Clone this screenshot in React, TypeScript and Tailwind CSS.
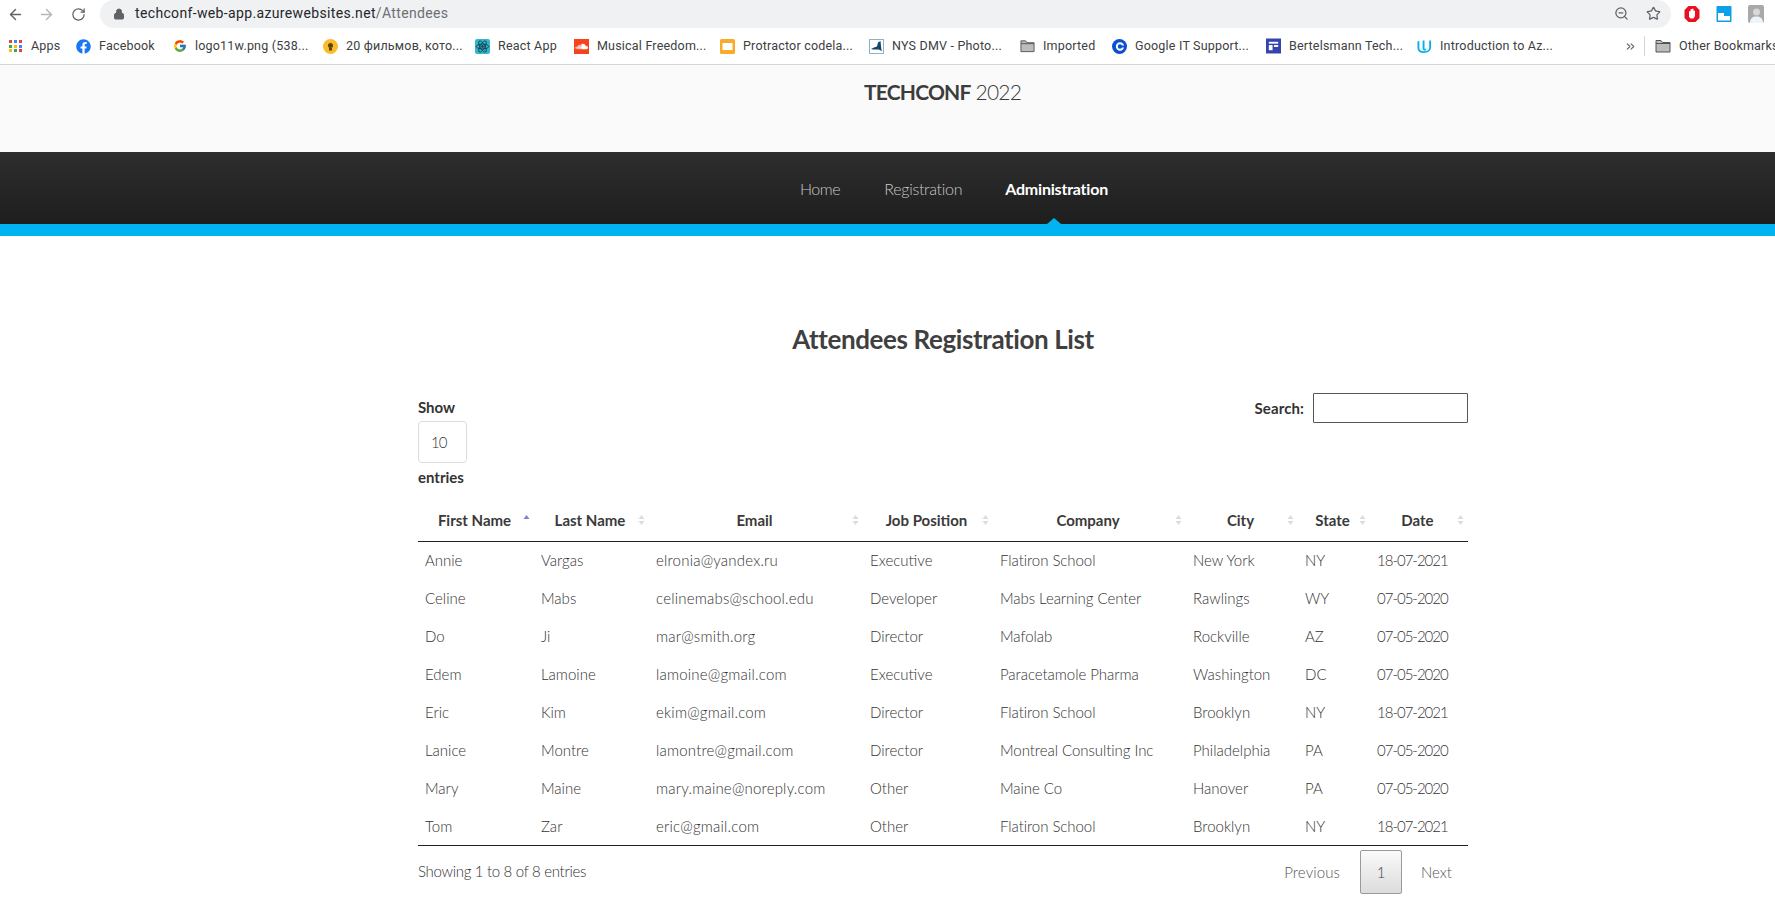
import { ArrowLeft, ArrowRight, RotateCw, Lock, ZoomOut, Star, ChevronsRight } from "lucide-react";
import { FaFacebook, FaSoundcloud } from "react-icons/fa";
import { FcGoogle } from "react-icons/fc";
import type { ReactNode } from "react";

const FolderIcon = () => (
    <svg width="16" height="14" viewBox="0 0 16 14">
        <path d="M1 1.5h5l1.5 2H15v9.5H1z" fill="#bdbdbd" stroke="#555" strokeWidth="1" />
        <path d="M1 4.5h14" stroke="#555" strokeWidth="1" />
    </svg>
);

const AppsIcon = () => {
    const colors = ["#ea4335", "#4285f4", "#ea4335", "#34a853", "#fbbc05", "#4285f4", "#fbbc05", "#34a853", "#ea4335"];
    return (
        <div className="grid grid-cols-3 gap-[1.5px] w-[13px]">
            {colors.map((c, i) => (
                <span key={i} className="h-[3px] w-[3px]" style={{ backgroundColor: c }}></span>
            ))}
        </div>
    );
};

const BulbIcon = () => (
    <svg width="15" height="15" viewBox="0 0 15 15">
        <circle cx="7.5" cy="7.5" r="7.5" fill="#fbbc2c" />
        <circle cx="7.5" cy="6.5" r="2.5" fill="#5a4510" />
        <rect x="6" y="9" width="3" height="2.5" fill="#5a4510" />
    </svg>
);

const ReactIcon = () => (
    <svg width="15" height="15" viewBox="0 0 15 15">
        <rect width="15" height="15" rx="2" fill="#35b6cf" />
        <g fill="none" stroke="#12343f" strokeWidth="0.8">
            <ellipse cx="7.5" cy="7.5" rx="6.3" ry="2.4" />
            <ellipse cx="7.5" cy="7.5" rx="6.3" ry="2.4" transform="rotate(60 7.5 7.5)" />
            <ellipse cx="7.5" cy="7.5" rx="6.3" ry="2.4" transform="rotate(120 7.5 7.5)" />
        </g>
        <circle cx="7.5" cy="7.5" r="1.2" fill="#12343f" />
    </svg>
);

const SoundIcon = () => (
    <div className="h-[15px] w-[15px] bg-[#f8421c] flex items-center justify-center text-white">
        <FaSoundcloud size={13} />
    </div>
);

const SlidesIcon = () => (
    <svg width="15" height="15" viewBox="0 0 15 15">
        <rect width="15" height="15" rx="1.5" fill="#f9ab2a" />
        <rect x="2.5" y="4" width="10" height="7" fill="#fff" />
    </svg>
);

const NyIcon = () => (
    <svg width="15" height="15" viewBox="0 0 15 15">
        <rect x="0.5" y="0.5" width="14" height="14" fill="#fff" stroke="#8fb2c9" />
        <path d="M2 10l3-1.5 3-1 1-4 2.5-1.5.8 8 .7 2-2.500-1-.5-.5H4z" fill="#12466e" />
    </svg>
);

const CircleCIcon = () => (
    <svg width="15" height="15" viewBox="0 0 15 15">
        <circle cx="7.500" cy="7.500" r="7.500" fill="#0b50d0" />
        <circle cx="8" cy="7.500" r="3.200" fill="none" stroke="#fff" strokeWidth="2" />
        <rect x="10" y="6.500" width="3" height="2" fill="#0b50d0" />
    </svg>
);

const BertelsmannIcon = () => (
    <svg width="16" height="16" viewBox="0 0 16 16">
        <rect width="16" height="16" fill="#3444ac" />
        <rect x="3" y="3.500" width="10" height="2" fill="#fff" />
        <rect x="3" y="7" width="4" height="5.500" fill="#fff" />
        <rect x="8.500" y="7" width="4.500" height="2" fill="#fff" />
    </svg>
);

const UdacityIcon = () => (
    <svg width="17" height="17" viewBox="0 0 16 16" fill="none" stroke="#02b3e4" strokeWidth="2">
        <path d="M1.500 2.500v7c0 3 2.500 4.500 6 4.500s6.500-2 6.500-5V1.500" />
        <path d="M7 1.500v8.500c0 1.500 1.500 1.500 2.500 1" />
    </svg>
);

const StopIcon = () => (
    <svg width="16" height="18" viewBox="0 0 16 18">
        <path d="M4.500 1h7L15.500 5v8l-4 4h-7l-4-4V5z" fill="#e81123" />
        <path d="M5 12V6.500a1 1 0 0 1 1.500 0V4.500a1 1 0 0 1 1.500 0V4a1 1 0 0 1 1.500 0v2a1 1 0 0 1 1.500 0v5l-1.500 2.500H6.500z" fill="#fff" />
    </svg>
);

const WindowIcon = () => (
    <svg width="16" height="16" viewBox="0 0 15 16">
        <rect width="15" height="16" rx="1" fill="#0d9fe8" />
        <rect x="1.500" y="7" width="12" height="7.500" fill="#fff" />
        <rect x="7.500" y="7" width="6" height="3" fill="#0d9fe8" />
    </svg>
);

const AvatarIcon = () => (
    <svg width="16" height="18" viewBox="0 0 16 18">
        <rect width="16" height="18" rx="2" fill="#a9a9a9" />
        <circle cx="8.500" cy="7" r="3.500" fill="#d8d8d8" />
        <path d="M2 18c0-5 3-6.500 6.500-6.500S15 13 15 18z" fill="#eef4f8" />
    </svg>
);

const bookmarks: { label: string; icon: ReactNode; itemClass: string }[] = [
    { label: "Apps", icon: <AppsIcon />, itemClass: "w-[54px]" },
    { label: "Facebook", icon: <FaFacebook size={15} color="#1877f2" />, itemClass: "w-[82px]" },
    { label: "logo11w.png (538...", icon: <FcGoogle size={14} />, itemClass: "w-[137px]" },
    { label: "20 фильмов, кото...", icon: <BulbIcon />, itemClass: "w-[138px]" },
    { label: "React App", icon: <ReactIcon />, itemClass: "w-[85px]" },
    { label: "Musical Freedom...", icon: <SoundIcon />, itemClass: "w-[132px]" },
    { label: "Protractor codela...", icon: <SlidesIcon />, itemClass: "w-[135px]" },
    { label: "NYS DMV - Photo...", icon: <NyIcon />, itemClass: "w-[137px]" },
    { label: "Imported", icon: <FolderIcon />, itemClass: "w-[78px]" },
    { label: "Google IT Support...", icon: <CircleCIcon />, itemClass: "w-[140px]" },
    { label: "Bertelsmann Tech...", icon: <BertelsmannIcon />, itemClass: "w-[137px]" },
    { label: "Introduction to Az...", icon: <UdacityIcon />, itemClass: "w-[193px]" },
];

const rows = [
    ["Annie", "Vargas", "elronia@yandex.ru", "Executive", "Flatiron School", "New York", "NY", "18-07-2021"],
    ["Celine", "Mabs", "celinemabs@school.edu", "Developer", "Mabs Learning Center", "Rawlings", "WY", "07-05-2020"],
    ["Do", "Ji", "mar@smith.org", "Director", "Mafolab", "Rockville", "AZ", "07-05-2020"],
    ["Edem", "Lamoine", "lamoine@gmail.com", "Executive", "Paracetamole Pharma", "Washington", "DC", "07-05-2020"],
    ["Eric", "Kim", "ekim@gmail.com", "Director", "Flatiron School", "Brooklyn", "NY", "18-07-2021"],
    ["Lanice", "Montre", "lamontre@gmail.com", "Director", "Montreal Consulting Inc", "Philadelphia", "PA", "07-05-2020"],
    ["Mary", "Maine", "mary.maine@noreply.com", "Other", "Maine Co", "Hanover", "PA", "07-05-2020"],
    ["Tom", "Zar", "eric@gmail.com", "Other", "Flatiron School", "Brooklyn", "NY", "18-07-2021"],
];

const columns = [
    { title: "First Name", width: "w-[116px]", cell: "" },
    { title: "Last Name", width: "w-[115px]", cell: "" },
    { title: "Email", width: "w-[214px]", cell: "tracking-[0.2px]" },
    { title: "Job Position", width: "w-[130px]", cell: "" },
    { title: "Company", width: "w-[193px]", cell: "tracking-[-0.05px]" },
    { title: "City", width: "w-[112px]", cell: "" },
    { title: "State", width: "w-[72px]", cell: "" },
    { title: "Date", width: "w-[98px]", cell: "tracking-[-1px]" },
];

const SortIcon = ({ active }: { active?: boolean }) => (
    <svg width="7" height="12" viewBox="0 0 7 12" className="absolute right-[4px] top-[14px]">
        <path d="M3.500 1L6.500 5H0.500z" fill={active ? "#7b83d6" : "#dcdcdc"} />
        {!active && <path d="M3.500 11L0.500 7H6.500z" fill="#dcdcdc" />}
    </svg>
);

export default function App() {
    return (
        <div className="min-h-[917px] bg-white overflow-hidden font-['Lato',sans-serif] text-[#333]">
            {/* browser chrome */}
            <div className="h-[28px] flex items-center pl-[7px] pr-[7px] font-['Roboto',sans-serif]">
                <ArrowLeft size={17} className="text-[#5f6368] shrink-0" />
                <ArrowRight size={17} className="text-[#b4b6b9] ml-[14px] shrink-0" />
                <RotateCw size={15} className="text-[#5f6368] ml-[16px] shrink-0" />
                <div className="ml-[14px] h-[28px] w-[1571px] shrink-0 rounded-[14px] bg-[#f0f1f3] flex items-center pl-[13px] pr-[10px] -mt-[1px]">
                    <Lock size={12} className="text-[#5f6368]" fill="#5f6368" />
                    <span className="ml-[10px] text-[14px] tracking-[0.35px] text-[#24272b]">
                        techconf-web-app.azurewebsites.net<span className="text-[#6b6f74]">/Attendees</span>
                    </span>
                    <ZoomOut size={15} className="ml-auto text-[#5f6368]" />
                    <Star size={15} className="ml-[17px] text-[#5f6368]" />
                </div>
                <div className="ml-[13px] flex items-center gap-[16px] shrink-0">
                    <StopIcon />
                    <WindowIcon />
                    <AvatarIcon />
                </div>
            </div>
            <div className="h-[37px] border-b border-[#d4d6da] flex items-center pl-[8px] gap-[14px] whitespace-nowrap font-['Roboto',sans-serif] text-[12.5px] tracking-[0.2px] text-[#3c4043]">
                {bookmarks.map((b) => (
                    <div key={b.label} className={`flex items-center gap-[8px] shrink-0 ${b.itemClass}`}>
                        <span className="w-[15px] flex justify-center shrink-0">{b.icon}</span>
                        <span>{b.label}</span>
                    </div>
                ))}
                <ChevronsRight size={13} className="text-[#5f6368] shrink-0" />
                <div className="h-[20px] w-px bg-[#d4d6da] ml-[-7px] shrink-0"></div>
                <div className="flex items-center gap-[8px] ml-[-4px] shrink-0">
                    <FolderIcon />
                    <span>Other Bookmarks</span>
                </div>
            </div>

            {/* site header */}
            <header className="h-[87px] bg-[#fafafa] flex justify-center pt-[12px]">
                <h1 className="text-[21px] leading-[30px] tracking-[-0.8px] text-[#3c3c3c] font-light ml-[110px]">
                    <span className="font-bold">TECHCONF</span> 2022
                </h1>
            </header>
            <nav className="h-[72px] bg-gradient-to-b from-[#2e2e2e] to-[#1e1e1e] flex justify-center text-[16px] pt-[26px] pl-[133px]">
                <span className="font-light text-[#c8c8c8] leading-[22px] tracking-[-0.4px]">Home</span>
                <span className="font-light text-[#c8c8c8] leading-[22px] ml-[44px] tracking-[-0.3px]">Registration</span>
                <span className="relative font-bold text-white leading-[22px] ml-[43px] tracking-[-0.2px]">
                    Administration
                    <span className="absolute left-[47%] -translate-x-1/2 top-[40px] w-0 h-0 border-x-[7px] border-x-transparent border-b-[6px] border-b-[#00b4f1]"></span>
                </span>
            </nav>
            <div className="h-[12px] bg-[#00b4f1]"></div>

            {/* main */}
            <main className="w-[1050px] ml-[418px]">
                <h2 className="mt-[84px] text-[26px] leading-[38px] tracking-[-0.4px] font-bold text-[#3f3f3f] text-center">
                    Attendees Registration List
                </h2>
                <div className="mt-[35px] flex justify-between">
                    <div className="text-[15px] font-bold leading-[20px]">
                        <div className="mt-[4px]">Show</div>
                        <div className="mt-[4px] h-[42px] w-[49px] border border-[#dcdcdc] rounded-[4px] flex items-center pl-[12px] text-[15px] font-light text-[#333] tracking-[-1px]">
                            10
                        </div>
                        <div className="mt-[4px]">entries</div>
                    </div>
                    <div className="flex items-start text-[15px] font-bold">
                        <span className="mt-[5px] leading-[20px] tracking-[0.1px]">Search:</span>
                        <div className="ml-[9px] h-[30px] w-[155px] border border-[#555] rounded-[1px]"></div>
                    </div>
                </div>

                <table className="mt-[13px] w-[1050px] table-fixed border-collapse">
                    <thead>
                        <tr className="h-[41px] border-b-[1.5px] border-[#222]">
                            {columns.map((c, i) => (
                                <th key={c.title} className={`relative text-center text-[15px] font-bold text-[#3a3a3a] pr-[3px] ${c.width}`}>
                                    {c.title}
                                    <SortIcon active={i === 0} />
                                </th>
                            ))}
                        </tr>
                    </thead>
                    <tbody className="text-[15px] font-light text-[#333]">
                        {rows.map((r) => (
                            <tr key={r[0]} className="h-[38px]">
                                {r.map((v, i) => (
                                    <td key={i} className={`px-[7px] whitespace-nowrap ${columns[i].cell}`}>{v}</td>
                                ))}
                            </tr>
                        ))}
                    </tbody>
                </table>

                <div className="border-t-[1.5px] border-[#222] flex justify-between items-start">
                    <div className="mt-[15px] text-[15px] leading-[20px] font-light text-[#333] tracking-[-0.3px]">Showing 1 to 8 of 8 entries</div>
                    <div className="flex items-center mt-[4px] text-[15px] font-light text-[#555]">
                        <span className="tracking-[0.1px]">Previous</span>
                        <div className="ml-[20px] h-[44px] w-[42px] flex items-center justify-center border border-[#9a9a9a] rounded-[2px] bg-gradient-to-b from-[#fafafa] to-[#dcdcdc] text-[#444]">1</div>
                        <span className="ml-[19px] mr-[16px]">Next</span>
                    </div>
                </div>
            </main>
        </div>
    );
}
